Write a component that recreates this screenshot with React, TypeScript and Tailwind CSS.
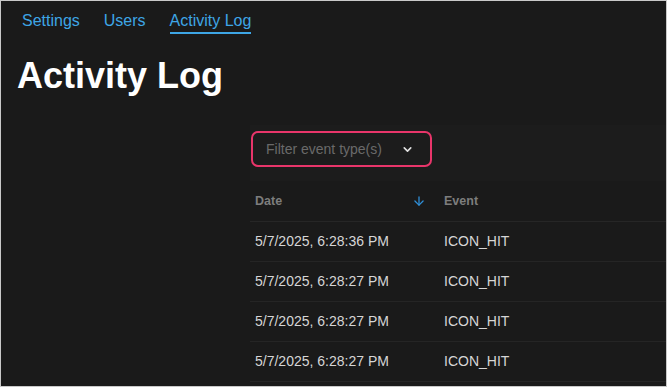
import { ChevronDown, ArrowDown } from "lucide-react";

const rows = [
  { date: "5/7/2025, 6:28:36 PM", event: "ICON_HIT" },
  { date: "5/7/2025, 6:28:27 PM", event: "ICON_HIT" },
  { date: "5/7/2025, 6:28:27 PM", event: "ICON_HIT" },
  { date: "5/7/2025, 6:28:27 PM", event: "ICON_HIT" },
];

export default function App() {
  return (
    <div
      className="h-[387px] w-[667px] overflow-hidden border border-[#c9c9c9] bg-[#1a1a1a]"
      style={{ fontFamily: '"Liberation Sans", Arial, sans-serif' }}
    >
      {/* nav */}
      <nav className="flex gap-6 pl-[21px] pt-[10px] text-[16px] leading-[20px] text-[#3ea6e6]">
        <a className="pb-[3px]">Settings</a>
        <a className="pb-[3px]">Users</a>
        <a className="border-b-2 border-[#3ea6e6] pb-px">Activity Log</a>
      </nav>

      <h1 className="ml-[16px] mt-[22px] text-[36px] font-bold leading-[40px] text-white">
        Activity Log
      </h1>

      {/* table */}
      <section className="ml-[249px] mt-[29px] bg-[#1c1c1c]">
        <div className="px-px pb-[14px] pt-[6px]">
          <button
            type="button"
            className="flex h-[36px] w-[181px] items-center justify-between rounded-[7px] border-2 border-[#e8356a] pl-[13px] pr-[16px] text-[14px] text-[#6a6a6a]"
          >
            Filter event type(s)
            <ChevronDown size={13} strokeWidth={3} className="text-[#e0e0e0]" />
          </button>
        </div>

        <div className="flex h-[41px] items-center border-b border-[#262626] bg-[#1a1a1a] text-[12.5px] font-bold text-[#7d7d7d]">
          <div className="flex w-[188px] items-center justify-between pl-[5px] pr-[12px]">
            <span>Date</span>
            <ArrowDown size={14} strokeWidth={2.2} className="text-[#2f8fd8]" />
          </div>
          <span className="pl-[6px]">Event</span>
        </div>

        {rows.map((r, i) => (
          <div
            key={i}
            className="flex h-[40px] items-center border-b border-[#252525] bg-[#1a1a1a] text-[14px] text-[#d6d6d6]"
          >
            <span className="w-[194px] pl-[5px]">{r.date}</span>
            <span>{r.event}</span>
          </div>
        ))}
      </section>
    </div>
  );
}
